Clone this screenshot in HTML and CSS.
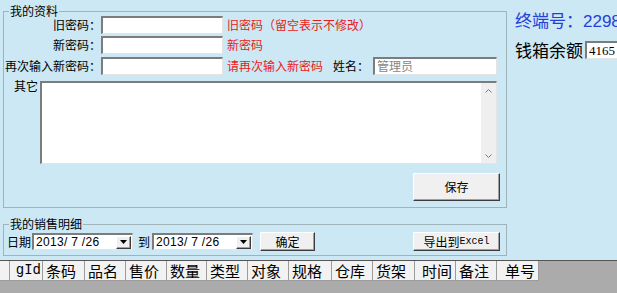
FILE: index.html
```html
<!DOCTYPE html>
<html lang="zh-CN">
<head>
<meta charset="utf-8">
<title>我的资料</title>
<link rel="stylesheet" href="styles.css">
</head>
<body>
<div class="app">
  <div class="top">
    <div class="left">
      <fieldset class="group profile">
        <legend>我的资料</legend>
        <div class="form">
          <div class="row">
            <span class="lbl">旧密码：</span>
            <div class="box pw"></div>
            <span class="hint">旧密码（留空表示不修改）</span>
          </div>
          <div class="row">
            <span class="lbl">新密码：</span>
            <div class="box pw"></div>
            <span class="hint">新密码</span>
          </div>
          <div class="row r3">
            <span class="lbl">再次输入新密码：</span>
            <div class="box pw"></div>
            <span class="hint wide">请再次输入新密码</span>
            <span class="lbl2">姓名：</span>
            <div class="box name">管理员</div>
          </div>
          <div class="other">
            <span class="lbl">其它</span>
            <div class="box memo">
              <div class="vscroll">
                <svg width="7" height="4" viewBox="0 0 7 4"><path d="M0.5 3.5 L3.5 0.5 L6.5 3.5" fill="none" stroke="#7a7a7a" stroke-width="1"/></svg>
                <svg width="7" height="4" viewBox="0 0 7 4"><path d="M0.5 0.5 L3.5 3.5 L6.5 0.5" fill="none" stroke="#7a7a7a" stroke-width="1"/></svg>
              </div>
            </div>
          </div>
          <div class="actions">
            <div class="btn save">保存</div>
          </div>
        </div>
      </fieldset>
      <fieldset class="group sales">
        <legend>我的销售明细</legend>
        <div class="daterow">
          <span class="dlbl">日期</span>
          <div class="box combo">
            <span class="date">2013/ 7 /26</span>
            <div class="btn drop"><svg width="7" height="4" viewBox="0 0 7 4"><path d="M0 0 H7 L3.5 4 Z" fill="#000"/></svg></div>
          </div>
          <span class="to">到</span>
          <div class="box combo">
            <span class="date">2013/ 7 /26</span>
            <div class="btn drop"><svg width="7" height="4" viewBox="0 0 7 4"><path d="M0 0 H7 L3.5 4 Z" fill="#000"/></svg></div>
          </div>
          <div class="btn ok">确定</div>
          <div class="spacer"></div>
          <div class="btn export">导出到<span class="latin">Excel</span></div>
        </div>
      </fieldset>
    </div>
    <div class="side">
      <div class="term">终端号：<span class="num">2298</span></div>
      <div class="cash">钱箱余额<div class="box cashbox">4165</div></div>
    </div>
  </div>
  <div class="grid">
    <div class="thead">
      <div class="th"></div>
      <div class="th r gid">gId</div>
      <div class="th">条码</div>
      <div class="th">品名</div>
      <div class="th">售价</div>
      <div class="th">数量</div>
      <div class="th">类型</div>
      <div class="th">对象</div>
      <div class="th">规格</div>
      <div class="th">仓库</div>
      <div class="th">货架</div>
      <div class="th r">时间</div>
      <div class="th">备注</div>
      <div class="th r">单号</div>
    </div>
  </div>
</div>
</body>
</html>
```

FILE: styles.css
```css
* { box-sizing: border-box; }
html, body { margin: 0; padding: 0; }
body {
  width: 617px;
  height: 293px;
  overflow: hidden;
  background: #cbe8f4;
  font-family: "Noto Sans CJK SC", sans-serif;
  font-size: 12px;
  color: #000;
}
.app { display: flex; flex-direction: column; height: 293px; }
.top { display: flex; align-items: flex-start; }
.left { width: 504px; margin-left: 3px; flex: none; }

.group {
  margin: 0;
  padding: 0 6px 0 0;
  border: 1px solid #9fb3bb;
  min-width: 0;
}
.group legend {
  font-size: 12px;
  line-height: 12px;
  padding: 0 1px;
  margin-left: 5px;
}
.profile { margin-top: 5px; padding-bottom: 6px; }
.sales { margin-top: 10px; padding-bottom: 4px; }

.form { margin-top: -1px; }
.row { display: flex; align-items: center; height: 18px; }
.row + .row { margin-top: 2px; }
.row.r3 { margin-top: 3px; }
.lbl { width: 97px; text-align: right; flex: none; white-space: nowrap; line-height: 14px; }

.box {
  background: #fff;
  border-style: solid;
  border-width: 2px 1px 1px 2px;
  border-color: #7c7c7c #e4e4e4 #e4e4e4 #7c7c7c;
  height: 18px;
  flex: none;
}
.pw { width: 122px; }
.hint { color: #ea1a1a; margin-left: 4px; white-space: nowrap; line-height: 14px; }
.hint.wide { width: 106px; flex: none; }
.lbl2 { width: 40px; flex: none; line-height: 14px; }
.name { width: 124px; color: #858585; padding-left: 2px; line-height: 14px; }

.other { display: flex; margin-top: 6px; }
.other .lbl { width: 36px; padding-right: 2px; margin-top: -1px; line-height: 12px; }
.memo { width: 457px; height: 83px; display: flex; justify-content: flex-end; }
.vscroll {
  width: 15px;
  background: #efefef;
  display: flex;
  flex-direction: column;
  justify-content: space-between;
  align-items: center;
  padding: 6px 0 5px;
}
.vscroll svg { display: block; }

.actions { display: flex; justify-content: flex-end; margin-top: 9px; }
.btn {
  background: #f0f0f0;
  border: 1px solid;
  border-color: #ffffff #3c3c3c #3c3c3c #ffffff;
  box-shadow: inset -1px -1px #a0a0a0;
  display: flex;
  align-items: center;
  justify-content: center;
  flex: none;
  line-height: 14px;
}
.save { width: 87px; height: 28px; }

.daterow { display: flex; align-items: center; height: 19px; margin-top: 2px; }
.dlbl { padding-left: 3px; line-height: 14px; }
.combo {
  width: 101px;
  height: 17px;
  margin-left: 1px;
  display: flex;
  align-items: center;
  justify-content: space-between;
  padding: 0 1px 0 2px;
}
.date { font-family: "Liberation Sans", sans-serif; font-size: 12px; line-height: 13px; letter-spacing: 0.3px; }
.drop { width: 15px; height: 13px; }
.drop svg { display: block; }
.to { margin-left: 5px; line-height: 14px; }
.combo + .combo, .to + .combo { margin-left: 2px; }
.ok { width: 55px; height: 19px; margin-left: 7px; }
.spacer { flex: 1; }
.export { width: 87px; height: 19px; }
.latin { font-family: "Liberation Mono", monospace; font-size: 10px; }

.side {
  margin-left: 8px;
  padding-top: 10px;
  flex: 1;
  min-width: 0;
  overflow: hidden;
  white-space: nowrap;
  font-size: 17px;
  line-height: 20px;
}
.term { color: #2440d8; }
.num { font-family: "Liberation Sans", sans-serif; }
.cash { display: flex; align-items: center; margin-top: 8px; }
.cashbox {
  width: 40px;
  height: 18px;
  margin-left: 2px;
  font-family: "Liberation Serif", serif;
  font-size: 13px;
  line-height: 15px;
  padding-left: 2px;
}

.grid { margin-top: 4px; flex: 1; background: #ababab; border-top: 1px solid #555; }
.thead { display: flex; height: 20px; }
.th {
  flex: none;
  background: #f2f2f2;
  border-right: 1px solid #9c9c9c;
  border-bottom: 1px solid #9c9c9c;
  font-size: 15px;
  line-height: 19px;
  padding: 0 3px;
  white-space: nowrap;
  overflow: hidden;
}
.th.r { text-align: right; }
.th.gid { font-family: "Liberation Mono", monospace; font-size: 14px; padding: 0 1px 0 0; }
.th:nth-child(1) { width: 10px; }
.th:nth-child(2) { width: 33px; }
.th:nth-child(3) { width: 42px; }
.th:nth-child(4) { width: 41px; }
.th:nth-child(5) { width: 41px; }
.th:nth-child(6) { width: 40px; }
.th:nth-child(7) { width: 41px; }
.th:nth-child(8) { width: 41px; }
.th:nth-child(9) { width: 43px; }
.th:nth-child(10) { width: 41px; }
.th:nth-child(11) { width: 42px; }
.th:nth-child(12) { width: 41px; }
.th:nth-child(13) { width: 41px; }
.th:nth-child(14) { width: 42px; }
```
